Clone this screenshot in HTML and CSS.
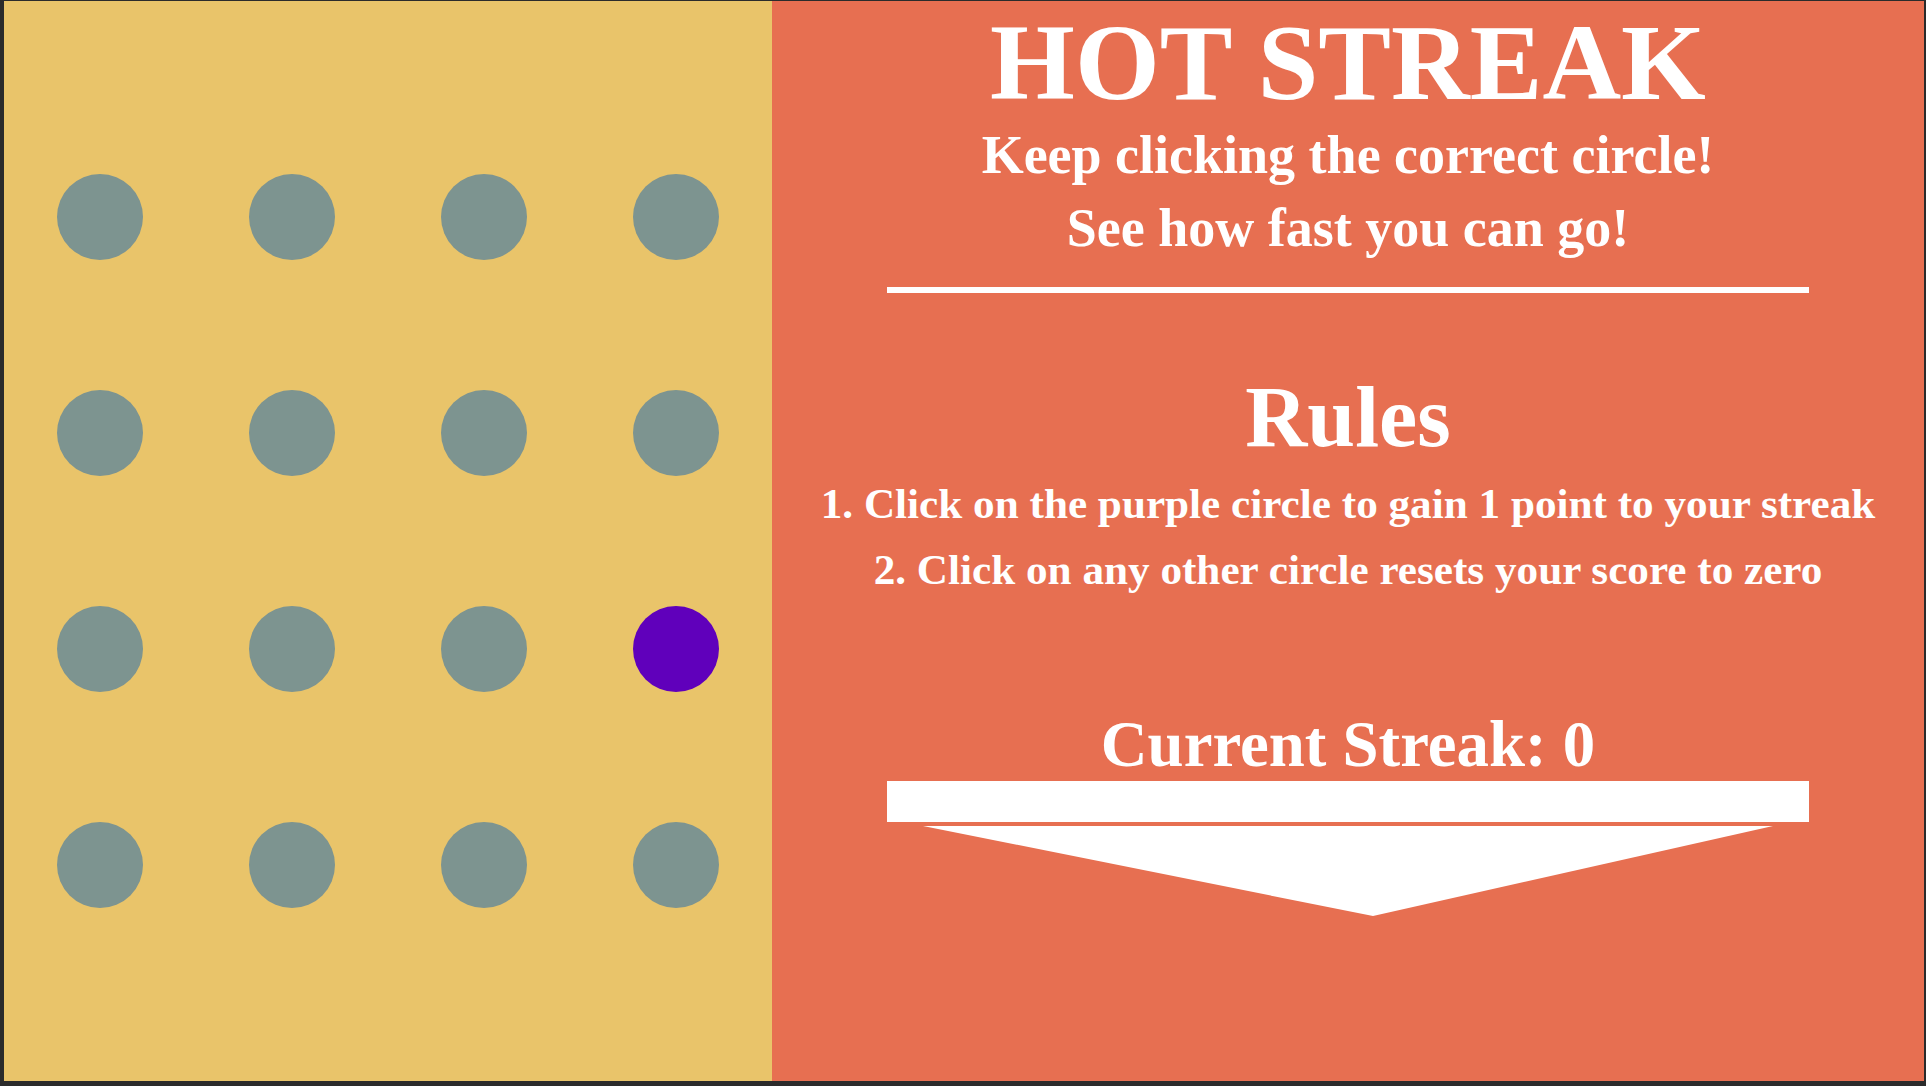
FILE: index.html
```html
<!DOCTYPE html>
<html lang="en">
<head>
<meta charset="utf-8">
<title>Hot Streak</title>
<link rel="stylesheet" href="styles.css">
</head>
<body>
<div class="frame">
  <section class="board">
    <div class="dot"></div><div class="dot"></div><div class="dot"></div><div class="dot"></div>
    <div class="dot"></div><div class="dot"></div><div class="dot"></div><div class="dot"></div>
    <div class="dot"></div><div class="dot"></div><div class="dot"></div><div class="dot active"></div>
    <div class="dot"></div><div class="dot"></div><div class="dot"></div><div class="dot"></div>
  </section>
  <section class="info">
    <h1 class="title">HOT STREAK</h1>
    <div class="subtitle">
      <p>Keep clicking the correct circle!</p>
      <p>See how fast you can go!</p>
    </div>
    <div class="divider"></div>
    <h2 class="rules-title">Rules</h2>
    <div class="rules">
      <p>1. Click on the purple circle to gain 1 point to your streak</p>
      <p>2. Click on any other circle resets your score to zero</p>
    </div>
    <div class="streak">Current Streak: 0</div>
    <div class="bar"></div>
    <div class="arrow"></div>
  </section>
</div>
</body>
</html>
```
FILE: styles.css
```css
html, body {
  margin: 0;
  padding: 0;
}
body {
  background: #2b2b2b;
  width: 1926px;
  height: 1086px;
  overflow: hidden;
  font-family: "Liberation Serif", "Times New Roman", serif;
}
.frame {
  display: flex;
  margin: 1px 2px 5px 4px;
  height: 1080px;
}
.board {
  width: 768px;
  flex: none;
  background: #e9c46a;
  display: grid;
  grid-template-columns: repeat(4, 192px);
  grid-auto-rows: 216px;
  padding-top: 108px;
  box-sizing: border-box;
}
.dot {
  width: 86px;
  height: 86px;
  border-radius: 50%;
  background: #7d9490;
  justify-self: center;
  align-self: center;
}
.dot.active {
  background: #6000bb;
}
.info {
  flex: 1;
  background: #e76f51;
  color: #ffffff;
  display: flex;
  flex-direction: column;
  align-items: center;
  font-weight: bold;
  text-align: center;
}
.title {
  margin: 6.7px 0 0;
  font-size: 109px;
  line-height: 109px;
  font-weight: bold;
  white-space: nowrap;
}
.subtitle {
  margin-top: 2.8px;
  font-size: 54px;
  line-height: 72.7px;
}
.subtitle p,
.rules p {
  margin: 0;
  white-space: nowrap;
}
.divider {
  margin-top: 22.6px;
  width: 80%;
  height: 6px;
  background: #ffffff;
}
.rules-title {
  margin: 80.3px 0 0;
  font-size: 86px;
  line-height: 86px;
  font-weight: bold;
}
.rules {
  margin-top: 11px;
  font-size: 43.2px;
  line-height: 66px;
}
.streak {
  margin-top: 109.5px;
  font-size: 64.8px;
  line-height: 65px;
  white-space: nowrap;
}
.bar {
  margin-top: 3.7px;
  width: 80%;
  height: 40.7px;
  background: #ffffff;
}
.arrow {
  margin-top: 4.3px;
  width: 0;
  height: 0;
  border-top: 90px solid #ffffff;
  border-left: 450px solid transparent;
  border-right: 400px solid transparent;
}
```
